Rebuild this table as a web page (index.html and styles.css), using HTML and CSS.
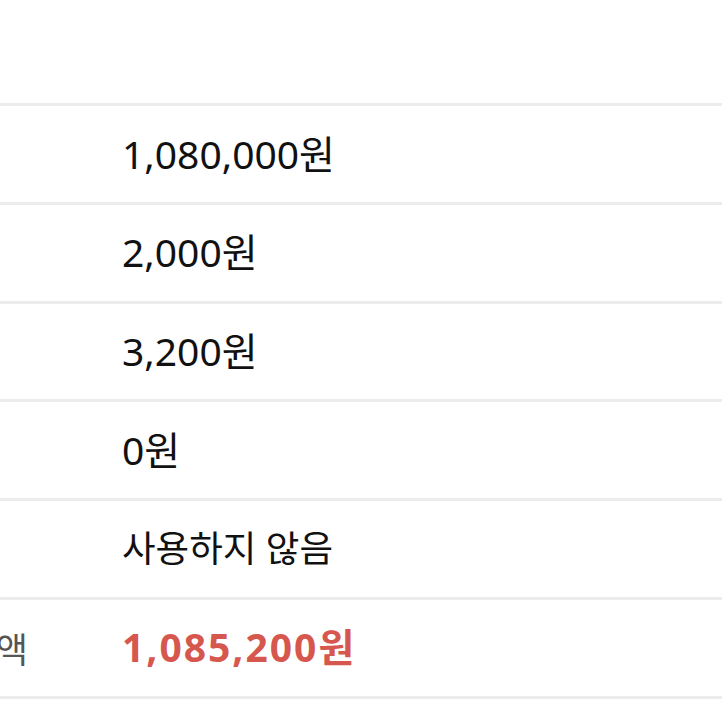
FILE: index.html
```html
<!DOCTYPE html>
<html lang="ko">
<head>
<meta charset="utf-8">
<link rel="stylesheet" href="styles.css">
</head>
<body>
<div class="top"></div>
<div class="table">
  <div class="row"><div class="label"></div><div class="value">1,080,000원</div></div>
  <div class="row"><div class="label"></div><div class="value">2,000원</div></div>
  <div class="row"><div class="label"></div><div class="value">3,200원</div></div>
  <div class="row"><div class="label"></div><div class="value">0원</div></div>
  <div class="row"><div class="label"></div><div class="value ko">사용하지 않음</div></div>
  <div class="row total"><div class="label"><span>총 결제 금액</span></div><div class="value">1,085,200원</div></div>
</div>
</body>
</html>
```
FILE: styles.css
```css
html, body {
  margin: 0;
  padding: 0;
  background: #ffffff;
}
body {
  font-family: "Noto Sans", "Noto Sans CJK KR", sans-serif;
  color: #111111;
  width: 722px;
  height: 722px;
  overflow: hidden;
}
.top {
  height: 103px;
}
.table {
  border-bottom: 3px solid #ececec;
}
.row {
  display: grid;
  grid-template-columns: 28px 1fr;
  column-gap: 94px;
  align-items: center;
  height: 95.8px;
  border-top: 3px solid #ececec;
}
.label {
  display: flex;
  justify-content: flex-end;
  overflow: hidden;
  white-space: nowrap;
  font-size: 35px;
  color: #555555;
}
.value {
  font-size: 39px;
  line-height: 1.2;
  white-space: nowrap;
}
.value.ko {
  font-size: 36.5px;
}
.total .value {
  font-weight: 700;
  color: #d6574e;
  letter-spacing: 2px;
}
```
